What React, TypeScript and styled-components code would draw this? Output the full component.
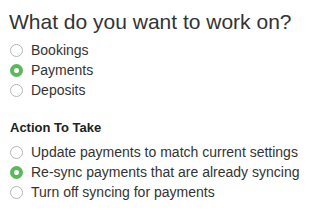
import React, { useState } from "react";
import styled, { createGlobalStyle } from "styled-components";

const GlobalStyle = createGlobalStyle`
  html, body {
    margin: 0;
    padding: 0;
    background: #ffffff;
  }
  body {
    font-family: "Liberation Sans", Arial, sans-serif;
    color: #333333;
  }
`;

const WORK_OPTIONS = ["Bookings", "Payments", "Deposits"];
const ACTIONS = [
  "Update payments to match current settings",
  "Re-sync payments that are already syncing",
  "Turn off syncing for payments",
];

export default function App() {
  const [work, setWork] = useState("Payments");
  const [action, setAction] = useState(ACTIONS[1]);

  return (
    <Container>
      <GlobalStyle />
      <Title>What do you want to work on?</Title>
      <RadioList>
        {WORK_OPTIONS.map((opt) => (
          <RadioRow key={opt} onClick={() => setWork(opt)}>
            <RadioDot checked={work === opt} />
            <RadioLabel>{opt}</RadioLabel>
          </RadioRow>
        ))}
      </RadioList>
      <SectionHead>Action To Take</SectionHead>
      <RadioList>
        {ACTIONS.map((opt) => (
          <RadioRow key={opt} onClick={() => setAction(opt)}>
            <RadioDot checked={action === opt} />
            <RadioLabel>{opt}</RadioLabel>
          </RadioRow>
        ))}
      </RadioList>
    </Container>
  );
}

const Container = styled.section`
  padding: 8px 0 0 10px;
  display: flex;
  flex-direction: column;
`;

const Title = styled.h2`
  margin: 0 0 0 -1px;
  font-size: 21px;
  font-weight: 400;
  line-height: 28px;
  color: #333333;
  white-space: nowrap;
`;

const RadioList = styled.div`
  display: flex;
  flex-direction: column;
  margin-top: 4px;
`;

const RadioRow = styled.label`
  display: flex;
  align-items: center;
  gap: 8px;
  height: 20px;
  cursor: pointer;
`;

const RadioDot = styled.span<{ checked: boolean }>`
  box-sizing: border-box;
  width: 13px;
  height: 13px;
  border-radius: 50%;
  background: #ffffff;
  border: ${(p) => (p.checked ? "4px solid #5cb85c" : "1px solid #b5b5b5")};
  flex-shrink: 0;
`;

const RadioLabel = styled.span`
  font-size: 14px;
  line-height: 20px;
  color: #333333;
  white-space: nowrap;
`;

const SectionHead = styled.h4`
  margin: 20px 0 2px 0;
  font-size: 13px;
  font-weight: 700;
  line-height: 16px;
  color: #222222;
`;
